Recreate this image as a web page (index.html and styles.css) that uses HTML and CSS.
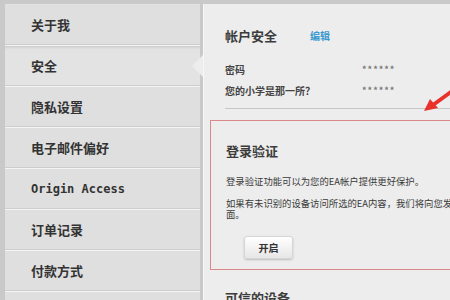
FILE: index.html
```html
<!DOCTYPE html>
<html lang="zh-CN">
<head>
    <meta charset="UTF-8">
    <title>帐户安全</title>
    <link rel="stylesheet" href="styles.css">
</head>
<body>
    <div class="page">
        <ul class="sidebar">
            <li class="nav-item">关于我</li>
            <li class="nav-item active">安全</li>
            <li class="nav-item">隐私设置</li>
            <li class="nav-item">电子邮件偏好</li>
            <li class="nav-item latin">Origin Access</li>
            <li class="nav-item">订单记录</li>
            <li class="nav-item">付款方式</li>
            <li class="nav-item"></li>
        </ul>

        <div class="panel">
            <div class="section-head">
                <h2>帐户安全</h2>
                <a class="edit-link" href="#">编辑</a>
            </div>
            <div class="info-row">
                <span class="info-label">密码</span>
                <span class="info-value">******</span>
            </div>
            <div class="info-row">
                <span class="info-label">您的小学是那一所？</span>
                <span class="info-value">******</span>
            </div>
            <div class="divider"></div>

            <div class="verify-box">
                <h2>登录验证</h2>
                <p>登录验证功能可以为您的EA帐户提供更好保护。</p>
                <p>如果有未识别的设备访问所选的EA内容，我们将向您发送安全码以验证登录页面。</p>
                <button class="btn">开启</button>
            </div>

            <h2 class="trusted">可信的设备</h2>

            <!-- red annotation arrow -->
            <svg class="mark-arrow" width="34" height="30" viewBox="0 0 34 30">
                <line x1="34" y1="3" x2="12" y2="19" stroke="#e8322b" stroke-width="4" stroke-linecap="round"/>
                <polygon points="3,25 9,13 17,22" fill="#e8322b"/>
            </svg>
        </div>
    </div>
</body>
</html>
```

FILE: styles.css
```css
body {
    margin: 0;
    width: 450px;
    height: 300px;
    overflow: hidden;
    background: #c9c9c9;
    font-family: "Noto Sans CJK SC", "DejaVu Sans", sans-serif;
    color: #333;
}
.page {
    display: flex;
    margin-top: 4px;
    margin-left: 5px;
    height: 296px;
    overflow: hidden;
}
.sidebar {
    flex-shrink: 0;
    list-style: none;
    margin: 0;
    padding: 0;
    width: 195px;
    background: #dedede;
}
.nav-item {
    position: relative;
    height: 39px;
    line-height: 39px;
    padding-left: 26px;
    font-size: 13px;
    font-weight: bold;
    color: #333;
    background: #dfdfdf;
    border-top: 1px solid #f4f4f4;
    border-bottom: 1px solid #cdcdcd;
}
.nav-item:first-child {
    border-top-color: #e2e2e2;
}
.nav-item.active {
    background: #e3e3e3;
    box-shadow: inset 0 3px 3px -2px #c4c4c4;
}
.nav-item.active::after {
    content: "";
    position: absolute;
    right: -3px;
    top: 9px;
    border-top: 11px solid transparent;
    border-bottom: 11px solid transparent;
    border-right: 11px solid #ededed;
}
.nav-item.latin {
    font-family: "DejaVu Sans Mono", monospace;
    font-size: 12px;
    line-height: 40px;
}
.panel {
    position: relative;
    flex: 1;
    min-width: 0;
    margin-left: 3px;
    border-left: 1px solid #f6f6f6;
    background: #ededed;
    padding: 21px 0 0 21px;
}
h2 {
    margin: 0;
    font-size: 13px;
    font-weight: bold;
    color: #3c3c3c;
}
.section-head {
    display: flex;
    align-items: center;
    height: 20px;
    margin-bottom: 14px;
}
.edit-link {
    margin-left: 33px;
    font-size: 10px;
    font-weight: bold;
    color: #3a9ad0;
    text-decoration: none;
}
.info-row {
    display: flex;
    height: 21px;
    line-height: 21px;
    font-size: 10px;
    font-weight: bold;
    color: #444;
}
.info-label {
    width: 137px;
}
.info-value {
    font-size: 9px;
    color: #777;
    letter-spacing: 1px;
}
.divider {
    margin-top: 7px;
    margin-right: -10px;
    border-top: 1px solid #c6c6c6;
}
.verify-box {
    margin: 11px 0 0 -15px;
    width: 345px;
    height: 150px;
    padding: 20px 0 0 15px;
    box-sizing: border-box;
    border: 1px solid #d9898a;
}
.verify-box h2 {
    margin-bottom: 16px;
}
.verify-box p {
    margin: 0 0 11px;
    width: 324px;
    font-size: 9.35px;
    line-height: 11px;
    color: #3a3a3a;
}
.btn {
    display: block;
    margin: 16px 0 0 18px;
    width: 49px;
    height: 23px;
    padding: 0;
    font-family: inherit;
    font-size: 10px;
    font-weight: bold;
    color: #333;
    background: linear-gradient(#ffffff, #e6e6e6);
    border: 1px solid #d6d6d6;
    border-radius: 3px;
    box-shadow: 0 1px 2px #bdbdbd;
}
.trusted {
    margin-top: 18px;
}
.mark-arrow {
    position: absolute;
    left: 217px;
    top: 82px;
}
```
